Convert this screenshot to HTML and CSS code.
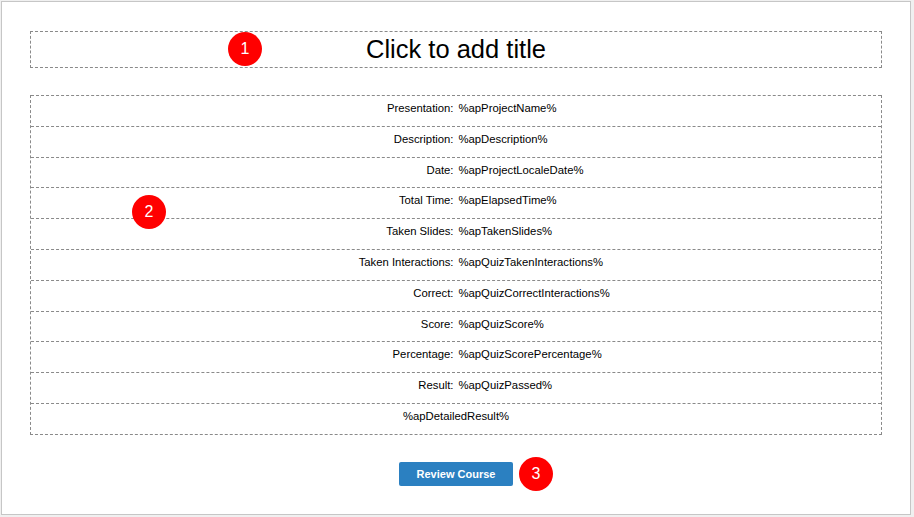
FILE: index.html
```html
<!DOCTYPE html>
<html>
<head>
<meta charset="utf-8">
<link rel="stylesheet" href="styles.css">
</head>
<body>
<div class="frame">
  <div class="title-box">
    <span class="title">Click to add title</span>
    <span class="badge badge-1">1</span>
  </div>
  <div class="table">
    <div class="row"><span class="label">Presentation:</span><span class="value">%apProjectName%</span></div>
    <div class="row"><span class="label">Description:</span><span class="value">%apDescription%</span></div>
    <div class="row"><span class="label">Date:</span><span class="value">%apProjectLocaleDate%</span></div>
    <div class="row"><span class="label">Total Time:</span><span class="value">%apElapsedTime%</span></div>
    <div class="row"><span class="label">Taken Slides:</span><span class="value">%apTakenSlides%</span></div>
    <div class="row"><span class="label">Taken Interactions:</span><span class="value">%apQuizTakenInteractions%</span></div>
    <div class="row"><span class="label">Correct:</span><span class="value">%apQuizCorrectInteractions%</span></div>
    <div class="row"><span class="label">Score:</span><span class="value">%apQuizScore%</span></div>
    <div class="row"><span class="label">Percentage:</span><span class="value">%apQuizScorePercentage%</span></div>
    <div class="row"><span class="label">Result:</span><span class="value">%apQuizPassed%</span></div>
    <div class="row row-full"><span class="full">%apDetailedResult%</span></div>
    <span class="badge badge-2">2</span>
  </div>
  <div class="actions">
    <div class="button-wrap">
      <button class="btn">Review Course</button>
      <span class="badge badge-3">3</span>
    </div>
  </div>
</div>
</body>
</html>
```
FILE: styles.css
```css
html, body {
  margin: 0;
  padding: 0;
  background: #f0f0f0;
  font-family: "Liberation Sans", Arial, sans-serif;
}
.frame {
  position: relative;
  margin: 1px 0 0 1px;
  background: #ffffff;
  border: 1px solid #c6c6c6;
  padding: 29px 28px 0 28px;
  box-sizing: border-box;
  width: 910px;
  height: 514px;
}
.title-box {
  position: relative;
  height: 37px;
  box-sizing: border-box;
  border: 1px dashed #8a8a8a;
  display: flex;
  align-items: center;
  justify-content: center;
}
.title {
  font-size: 25.5px;
  color: #000;
  line-height: 30px;
  margin-top: -1px;
}
.table {
  position: relative;
  margin-top: 27px;
  border: 1px dashed #8a8a8a;
  border-top: none;
}
.row {
  display: grid;
  grid-template-columns: 1fr 1fr;
  height: 30.8px;
  box-sizing: border-box;
  border-top: 1px dashed #8a8a8a;
  padding-top: 6px;
  font-size: 11.3px;
  line-height: 13px;
  color: #000;
}
.label {
  text-align: right;
  padding-right: 2.5px;
}
.value {
  padding-left: 2.5px;
}
.row-full {
  display: block;
  text-align: center;
}
.badge {
  position: absolute;
  width: 34px;
  height: 34px;
  border-radius: 50%;
  background: #ff0000;
  color: #ffffff;
  font-size: 16px;
  line-height: 34px;
  text-align: center;
}
.badge-1 {
  left: 197px;
  top: 0px;
}
.badge-2 {
  left: 101px;
  top: 100px;
}
.actions {
  display: flex;
  justify-content: center;
  margin-top: 27px;
}
.button-wrap {
  position: relative;
}
.btn {
  display: block;
  width: 114px;
  height: 24px;
  border: none;
  border-radius: 2px;
  background: #2b80c1;
  color: #ffffff;
  font-family: "Liberation Sans", Arial, sans-serif;
  font-weight: bold;
  font-size: 11px;
  padding: 0;
}
.badge-3 {
  left: 120px;
  top: -5px;
}
```
